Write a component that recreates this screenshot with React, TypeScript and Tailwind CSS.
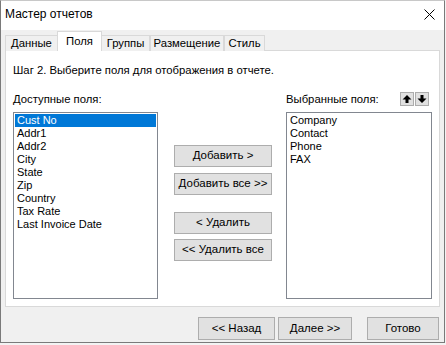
import React, { useState } from 'react';

const available = ['Cust No', 'Addr1', 'Addr2', 'City', 'State', 'Zip', 'Country', 'Tax Rate', 'Last Invoice Date'];
const chosen = ['Company', 'Contact', 'Phone', 'FAX'];
const tabs = ['Данные', 'Поля', 'Группы', 'Размещение', 'Стиль'];
const tabWidths = ['w-[52px]', 'w-[45px]', 'w-[48px]', 'w-[74px]', 'w-[41px]'];

const ui = { fontFamily: '"Segoe UI", "Liberation Sans", sans-serif' };
const listFont = { fontFamily: 'Tahoma, "Liberation Sans", sans-serif' };

const Btn: React.FC<{ label: string; className?: string }> = ({ label, className = '' }) => (
  <button
    type="button"
    className={`flex items-center justify-center bg-[#e1e1e1] border border-[#adadad] text-[11.5px] text-black leading-none ${className}`}
  >
    {label}
  </button>
);

const ArrowBtn: React.FC<{ down?: boolean }> = ({ down = false }) => (
  <button type="button" className="w-[14px] h-[14px] flex items-center justify-center bg-[#e1e1e1] border border-[#adadad]">
    <svg width="10" height="10" viewBox="0 0 10 10" className={down ? 'rotate-180' : ''}>
      <path d="M5 1 L9.5 5.5 L6.5 5.5 L6.5 9 L3.5 9 L3.5 5.5 L0.5 5.5 Z" fill="#000" />
    </svg>
  </button>
);

export default function App() {
  const [selected, setSelected] = useState('Cust No');
  const [tab, setTab] = useState(1);

  return (
    <div className="w-[446px] h-[345px] bg-[#f3f3f3]" style={ui}>
      <div className="w-[445px] h-[343px] flex flex-col border border-[#7a7a7a] border-t-[#c8c8c8] bg-[#f0f0f0]">
        {/* Title bar */}
        <div className="h-[29px] shrink-0 bg-white flex items-center justify-between pl-[4px] pr-[9px] pb-[3px]">
          <span className="text-[12px] text-black">Мастер отчетов</span>
          <svg width="11" height="11" viewBox="0 0 11 11">
            <path d="M0.5 0.5 L10.5 10.5 M10.5 0.5 L0.5 10.5" stroke="#000" strokeWidth="1" />
          </svg>
        </div>

        {/* Tabs */}
        <div className="flex items-end h-[20px] pl-[4px] mt-[1px] relative z-10">
          {tabs.map((t, i) => (
            <div
              key={t}
              onClick={() => setTab(i)}
              className={`${tabWidths[i]} flex items-center justify-center text-[11.3px] text-black border-[#d9d9d9] ${
                i === tab
                  ? 'h-[20px] bg-white border border-b-0'
                  : 'h-[16px] bg-[#f0f0f0] border border-b-0 ' + (i === tab + 1 ? 'border-l-0' : i === tab - 1 ? 'border-r-0' : '')
              }`}
            >
              {t}
            </div>
          ))}
        </div>

        {/* Panel */}
        <div className="mx-[4px] -mt-[1px] h-[257px] bg-white border border-[#d9d9d9] flex flex-col pl-[7px] pr-[7px] pt-[11px]">
          <div className="h-[16px] text-[11.3px] text-black leading-[16px]">Шаг 2. Выберите поля для отображения в отчете.</div>

          <div className="flex mt-[13px]">
            {/* Available */}
            <div className="w-[145px] flex flex-col">
              <div className="h-[16px] text-[11.3px] leading-[16px] text-black">Доступные поля:</div>
              <div className="mt-[5px] h-[187px] border border-[#828790] p-[1px]" style={listFont}>
                {available.map(a => (
                  <div
                    key={a}
                    onClick={() => setSelected(a)}
                    className={`h-[13px] leading-[13px] text-[11px] pl-[2px] ${
                      a === selected ? 'bg-[#0078d7] text-white' : 'text-black'
                    }`}
                  >
                    {a}
                  </div>
                ))}
              </div>
            </div>

            {/* Move buttons */}
            <div className="w-[98px] ml-[16px] flex flex-col pt-[54px]">
              <Btn label="Добавить >" className="h-[22px]" />
              <Btn label="Добавить все >>" className="h-[22px] mt-[6px]" />
              <Btn label="< Удалить" className="h-[22px] mt-[17px]" />
              <Btn label="<< Удалить все" className="h-[22px] mt-[5px]" />
            </div>

            {/* Selected */}
            <div className="w-[146px] ml-[14px] flex flex-col">
              <div className="h-[16px] flex items-center justify-between">
                <span className="text-[11.3px] leading-[16px] text-black">Выбранные поля:</span>
                <div className="flex gap-[1px] mr-[3px]">
                  <ArrowBtn />
                  <ArrowBtn down />
                </div>
              </div>
              <div className="mt-[5px] h-[187px] border border-[#828790] p-[1px]" style={listFont}>
                {chosen.map(c => (
                  <div key={c} className="h-[13px] leading-[13px] text-[11px] pl-[2px] text-black">
                    {c}
                  </div>
                ))}
              </div>
            </div>
          </div>
        </div>

        {/* Footer */}
        <div className="flex justify-end pr-[5px] mt-[10px]">
          <Btn label="<< Назад" className="w-[77px] h-[23px]" />
          <Btn label="Далее >>" className="w-[74px] h-[23px] ml-[3px]" />
          <Btn label="Готово" className="w-[72px] h-[23px] ml-[15px]" />
        </div>
      </div>
    </div>
  );
}
